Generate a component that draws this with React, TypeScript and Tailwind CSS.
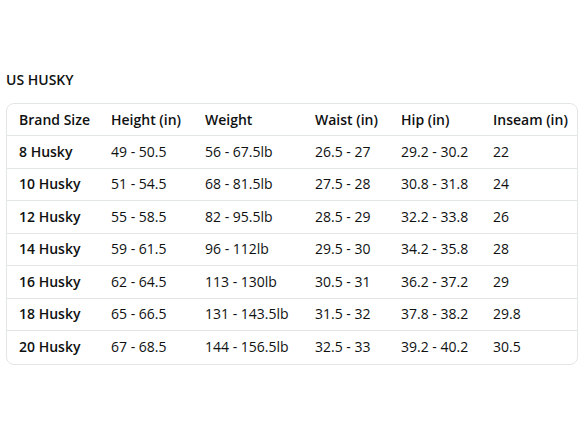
const HEADERS = ["Brand Size", "Height (in)", "Weight", "Waist (in)", "Hip (in)", "Inseam (in)"];

const ROWS: string[][] = [
  ["8 Husky", "49 - 50.5", "56 - 67.5lb", "26.5 - 27", "29.2 - 30.2", "22"],
  ["10 Husky", "51 - 54.5", "68 - 81.5lb", "27.5 - 28", "30.8 - 31.8", "24"],
  ["12 Husky", "55 - 58.5", "82 - 95.5lb", "28.5 - 29", "32.2 - 33.8", "26"],
  ["14 Husky", "59 - 61.5", "96 - 112lb", "29.5 - 30", "34.2 - 35.8", "28"],
  ["16 Husky", "62 - 64.5", "113 - 130lb", "30.5 - 31", "36.2 - 37.2", "29"],
  ["18 Husky", "65 - 66.5", "131 - 143.5lb", "31.5 - 32", "37.8 - 38.2", "29.8"],
  ["20 Husky", "67 - 68.5", "144 - 156.5lb", "32.5 - 33", "39.2 - 40.2", "30.5"],
];

const COLS = "grid grid-cols-[92px_94px_110px_86px_92px_1fr]";

export default function App() {
  return (
    <div className="w-[588px] h-[441px] bg-white text-[#0f1111] font-['Open_Sans',sans-serif] pt-[70px] px-[6px]">
      <h2 className="text-[14px] font-semibold leading-[20px] mb-[13px]">US HUSKY</h2>
      <div className="w-[572px] rounded-[8px] border border-[#e3e6e6] text-[14px] leading-[20px]">
        <div className={`${COLS} h-[32px] items-center pl-[12px] font-semibold whitespace-nowrap border-b border-[#e3e6e6]`}>
          {HEADERS.map((h) => (
            <div key={h}>{h}</div>
          ))}
        </div>
        {ROWS.map((row, i) => (
          <div
            key={row[0]}
            className={`${COLS} h-[32.5px] items-center pl-[12px] whitespace-nowrap ${i < ROWS.length - 1 ? "border-b border-[#e3e6e6]" : ""}`}
          >
            {row.map((cell, j) => (
              <div key={j} className={j === 0 ? "font-semibold" : ""}>
                {cell}
              </div>
            ))}
          </div>
        ))}
      </div>
    </div>
  );
}
